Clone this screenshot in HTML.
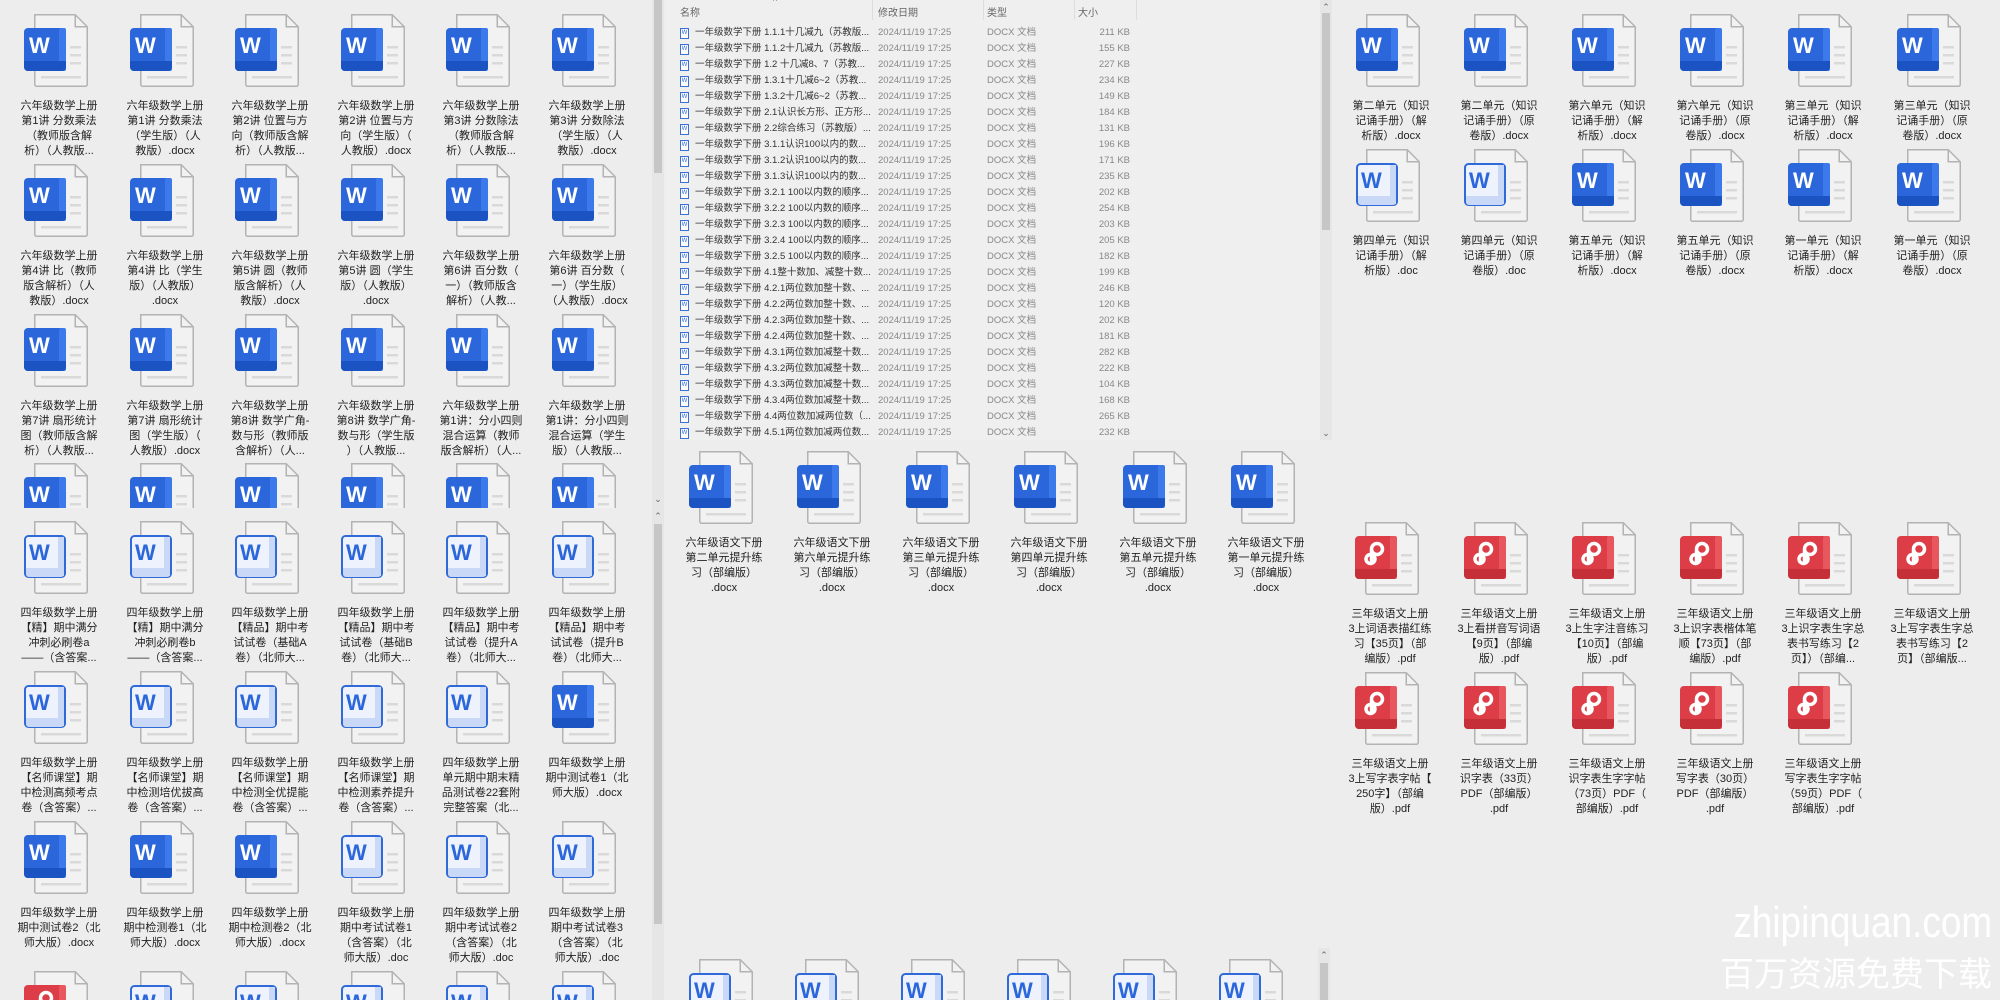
<!DOCTYPE html>
<html><head><meta charset="utf-8"><style>
*{box-sizing:border-box}
html{overflow:hidden;height:1000px}
body{margin:0;width:2000px;height:1000px;background:#ededed;position:relative;overflow:hidden;font-family:"Liberation Sans","Noto Sans CJK SC",sans-serif}
.pn{position:absolute;overflow:hidden}
.i{position:absolute;width:86px;height:150px}
.i svg{position:absolute;left:8px;top:0;width:66px;height:75px}
.i p{position:absolute;top:86px;left:-4px;width:94px;margin:0;text-align:center;font-size:11px;line-height:15px;color:#222;white-space:nowrap}
.sb{position:absolute;width:12px;background:#e6e6e6;overflow:hidden}
.th{position:absolute;left:2px;width:8px;background:#c6c6c6}
.ar{position:absolute;left:0;width:12px;text-align:center;font-size:9px;color:#666;line-height:10px}
.hd{position:absolute;top:4px;font-size:10px;color:#666}
.sep{position:absolute;top:0;width:1px;height:20px;background:#ddd}
.r{position:absolute;left:0;width:650px;height:16px;font-size:9.5px;line-height:16px;white-space:nowrap}
.r i{position:absolute;left:15px;top:3px;width:9px;height:11px;border:1px solid #3a6fd6;background:#fff;font-style:normal;font-size:6px;color:#2a64d6;line-height:9px;text-align:center}
.r .n{position:absolute;left:30px;width:177px;overflow:hidden;color:#333}
.r .d{position:absolute;left:213px;color:#888}
.r .t{position:absolute;left:322px;color:#888}
.r .s{position:absolute;left:415px;width:50px;text-align:right;color:#888}
.wm{position:absolute;right:8px;color:#fff;white-space:nowrap;text-align:right}
</style></head><body>
<svg width="0" height="0" style="position:absolute">
<defs>
<symbol id="pg" viewBox="0 0 66 75">
<path d="M10.75 1.75h40.5l12 12v57.5a2 2 0 0 1-2 2h-48.5a2 2 0 0 1-2-2z" fill="#f2f2f2" stroke="#b3b3b3" stroke-width="1.5"/>
<path d="M51.25 1.75v12h12" fill="none" stroke="#b3b3b3" stroke-width="1.5"/>
<rect x="46" y="33" width="11" height="2.5" fill="#d9d9d9"/><rect x="46" y="41" width="11" height="2.5" fill="#d9d9d9"/><rect x="46" y="49" width="11" height="2.5" fill="#d9d9d9"/><rect x="17" y="63" width="40" height="2.5" fill="#d9d9d9"/>
</symbol>
<symbol id="w" viewBox="0 0 66 75">
<use href="#pg"/>
<rect x="0" y="15" width="42" height="43" rx="4" fill="#2b67da"/>
<rect x="35" y="15" width="7" height="43" rx="2" fill="#3c79ea"/>
<path d="M0 48h42v6a4 4 0 0 1-4 4h-34a4 4 0 0 1-4-4z" fill="#1c53c2"/>
<text x="5" y="40" fill="#fff" font-family="Liberation Sans" font-weight="bold" font-size="22">W</text>
</symbol>
<symbol id="wl" viewBox="0 0 66 75">
<use href="#pg"/>
<rect x="1" y="16" width="40" height="41" rx="3.5" fill="#eef2fc" stroke="#2f6ad8" stroke-width="2"/>
<rect x="34" y="17" width="6" height="39" fill="#c9d8f6"/>
<path d="M2 48h38v6a3 3 0 0 1-3 3h-32a3 3 0 0 1-3-3z" fill="#c9d8f6"/>
<text x="5" y="40" fill="#2b67da" font-family="Liberation Sans" font-weight="bold" font-size="22">W</text>
</symbol>
<symbol id="pd" viewBox="0 0 66 75">
<use href="#pg"/>
<rect x="0" y="15" width="42" height="43" rx="4" fill="#dd3d46"/>
<rect x="35" y="15" width="7" height="43" rx="2" fill="#e8565e"/>
<path d="M0 48h42v6a4 4 0 0 1-4 4h-34a4 4 0 0 1-4-4z" fill="#c42f38"/>
<circle cx="22" cy="28" r="5.5" fill="none" stroke="#fff" stroke-width="3.5"/>
<circle cx="15.5" cy="38" r="4.5" fill="none" stroke="#fff" stroke-width="3.5"/>
<path d="M16.5 29.5v12" stroke="#fff" stroke-width="3.5"/>
</symbol>
</defs></svg>

<div class="pn" style="left:0;top:0;width:652px;height:508px">
<div class="i" style="left:16px;top:13px"><svg><use href="#w"/></svg><p>六年级数学上册<br>第1讲 分数乘法<br>（教师版含解<br>析）（人教版...</p></div>
<div class="i" style="left:122px;top:13px"><svg><use href="#w"/></svg><p>六年级数学上册<br>第1讲 分数乘法<br>（学生版）（人<br>教版）.docx</p></div>
<div class="i" style="left:227px;top:13px"><svg><use href="#w"/></svg><p>六年级数学上册<br>第2讲 位置与方<br>向（教师版含解<br>析）（人教版...</p></div>
<div class="i" style="left:333px;top:13px"><svg><use href="#w"/></svg><p>六年级数学上册<br>第2讲 位置与方<br>向（学生版）（<br>人教版）.docx</p></div>
<div class="i" style="left:438px;top:13px"><svg><use href="#w"/></svg><p>六年级数学上册<br>第3讲 分数除法<br>（教师版含解<br>析）（人教版...</p></div>
<div class="i" style="left:544px;top:13px"><svg><use href="#w"/></svg><p>六年级数学上册<br>第3讲 分数除法<br>（学生版）（人<br>教版）.docx</p></div>

<div class="i" style="left:16px;top:163px"><svg><use href="#w"/></svg><p>六年级数学上册<br>第4讲 比（教师<br>版含解析）（人<br>教版）.docx</p></div>
<div class="i" style="left:122px;top:163px"><svg><use href="#w"/></svg><p>六年级数学上册<br>第4讲 比（学生<br>版）（人教版）<br>.docx</p></div>
<div class="i" style="left:227px;top:163px"><svg><use href="#w"/></svg><p>六年级数学上册<br>第5讲 圆（教师<br>版含解析）（人<br>教版）.docx</p></div>
<div class="i" style="left:333px;top:163px"><svg><use href="#w"/></svg><p>六年级数学上册<br>第5讲 圆（学生<br>版）（人教版）<br>.docx</p></div>
<div class="i" style="left:438px;top:163px"><svg><use href="#w"/></svg><p>六年级数学上册<br>第6讲 百分数（<br>一）（教师版含<br>解析）（人教...</p></div>
<div class="i" style="left:544px;top:163px"><svg><use href="#w"/></svg><p>六年级数学上册<br>第6讲 百分数（<br>一）（学生版）<br>（人教版）.docx</p></div>

<div class="i" style="left:16px;top:313px"><svg><use href="#w"/></svg><p>六年级数学上册<br>第7讲 扇形统计<br>图（教师版含解<br>析）（人教版...</p></div>
<div class="i" style="left:122px;top:313px"><svg><use href="#w"/></svg><p>六年级数学上册<br>第7讲 扇形统计<br>图（学生版）（<br>人教版）.docx</p></div>
<div class="i" style="left:227px;top:313px"><svg><use href="#w"/></svg><p>六年级数学上册<br>第8讲 数学广角-<br>数与形（教师版<br>含解析）（人...</p></div>
<div class="i" style="left:333px;top:313px"><svg><use href="#w"/></svg><p>六年级数学上册<br>第8讲 数学广角-<br>数与形（学生版<br>）（人教版...</p></div>
<div class="i" style="left:438px;top:313px"><svg><use href="#w"/></svg><p>六年级数学上册<br>第1讲：分小四则<br>混合运算（教师<br>版含解析）（人...</p></div>
<div class="i" style="left:544px;top:313px"><svg><use href="#w"/></svg><p>六年级数学上册<br>第1讲：分小四则<br>混合运算（学生<br>版）（人教版...</p></div>

<div class="i" style="left:16px;top:462px;height:46px;overflow:hidden"><svg><use href="#w"/></svg></div>
<div class="i" style="left:122px;top:462px;height:46px;overflow:hidden"><svg><use href="#w"/></svg></div>
<div class="i" style="left:227px;top:462px;height:46px;overflow:hidden"><svg><use href="#w"/></svg></div>
<div class="i" style="left:333px;top:462px;height:46px;overflow:hidden"><svg><use href="#w"/></svg></div>
<div class="i" style="left:438px;top:462px;height:46px;overflow:hidden"><svg><use href="#w"/></svg></div>
<div class="i" style="left:544px;top:462px;height:46px;overflow:hidden"><svg><use href="#w"/></svg></div>
</div>

<div class="pn" style="left:0;top:508px;width:652px;height:492px">
<div class="i" style="left:16px;top:12px"><svg><use href="#wl"/></svg><p>四年级数学上册<br>【精】期中满分<br>冲刺必刷卷a<br>——（含答案...</p></div>
<div class="i" style="left:122px;top:12px"><svg><use href="#wl"/></svg><p>四年级数学上册<br>【精】期中满分<br>冲刺必刷卷b<br>——（含答案...</p></div>
<div class="i" style="left:227px;top:12px"><svg><use href="#wl"/></svg><p>四年级数学上册<br>【精品】期中考<br>试试卷（基础A<br>卷）（北师大...</p></div>
<div class="i" style="left:333px;top:12px"><svg><use href="#wl"/></svg><p>四年级数学上册<br>【精品】期中考<br>试试卷（基础B<br>卷）（北师大...</p></div>
<div class="i" style="left:438px;top:12px"><svg><use href="#wl"/></svg><p>四年级数学上册<br>【精品】期中考<br>试试卷（提升A<br>卷）（北师大...</p></div>
<div class="i" style="left:544px;top:12px"><svg><use href="#wl"/></svg><p>四年级数学上册<br>【精品】期中考<br>试试卷（提升B<br>卷）（北师大...</p></div>

<div class="i" style="left:16px;top:162px"><svg><use href="#wl"/></svg><p>四年级数学上册<br>【名师课堂】期<br>中检测高频考点<br>卷（含答案）...</p></div>
<div class="i" style="left:122px;top:162px"><svg><use href="#wl"/></svg><p>四年级数学上册<br>【名师课堂】期<br>中检测培优拔高<br>卷（含答案）...</p></div>
<div class="i" style="left:227px;top:162px"><svg><use href="#wl"/></svg><p>四年级数学上册<br>【名师课堂】期<br>中检测全优提能<br>卷（含答案）...</p></div>
<div class="i" style="left:333px;top:162px"><svg><use href="#wl"/></svg><p>四年级数学上册<br>【名师课堂】期<br>中检测素养提升<br>卷（含答案）...</p></div>
<div class="i" style="left:438px;top:162px"><svg><use href="#wl"/></svg><p>四年级数学上册<br>单元期中期末精<br>品测试卷22套附<br>完整答案（北...</p></div>
<div class="i" style="left:544px;top:162px"><svg><use href="#w"/></svg><p>四年级数学上册<br>期中测试卷1（北<br>师大版）.docx</p></div>

<div class="i" style="left:16px;top:312px"><svg><use href="#w"/></svg><p>四年级数学上册<br>期中测试卷2（北<br>师大版）.docx</p></div>
<div class="i" style="left:122px;top:312px"><svg><use href="#w"/></svg><p>四年级数学上册<br>期中检测卷1（北<br>师大版）.docx</p></div>
<div class="i" style="left:227px;top:312px"><svg><use href="#w"/></svg><p>四年级数学上册<br>期中检测卷2（北<br>师大版）.docx</p></div>
<div class="i" style="left:333px;top:312px"><svg><use href="#wl"/></svg><p>四年级数学上册<br>期中考试试卷1<br>（含答案）（北<br>师大版）.doc</p></div>
<div class="i" style="left:438px;top:312px"><svg><use href="#wl"/></svg><p>四年级数学上册<br>期中考试试卷2<br>（含答案）（北<br>师大版）.doc</p></div>
<div class="i" style="left:544px;top:312px"><svg><use href="#wl"/></svg><p>四年级数学上册<br>期中考试试卷3<br>（含答案）（北<br>师大版）.doc</p></div>

<div class="i" style="left:16px;top:462px;height:30px;overflow:hidden"><svg><use href="#pd"/></svg></div>
<div class="i" style="left:122px;top:462px;height:30px;overflow:hidden"><svg><use href="#wl"/></svg></div>
<div class="i" style="left:227px;top:462px;height:30px;overflow:hidden"><svg><use href="#wl"/></svg></div>
<div class="i" style="left:333px;top:462px;height:30px;overflow:hidden"><svg><use href="#wl"/></svg></div>
<div class="i" style="left:438px;top:462px;height:30px;overflow:hidden"><svg><use href="#wl"/></svg></div>
<div class="i" style="left:544px;top:462px;height:30px;overflow:hidden"><svg><use href="#wl"/></svg></div>
</div>

<div class="sb" style="left:652px;top:0;height:508px"><div class="th" style="top:0;height:173px"></div><div class="ar" style="top:494px">&#8964;</div></div>
<div class="sb" style="left:652px;top:508px;height:492px"><div class="ar" style="top:3px">&#8963;</div><div class="th" style="top:16px;height:400px"></div></div>

<div class="pn" style="left:665px;top:0;width:655px;height:440px;background:#efefef">
<div style="position:absolute;left:108px;top:-4px;font-size:9px;color:#888">^</div>
<div class="hd" style="left:15px">名称</div>
<div class="sep" style="left:207px"></div>
<div class="hd" style="left:213px">修改日期</div>
<div class="sep" style="left:318px"></div>
<div class="hd" style="left:322px">类型</div>
<div class="sep" style="left:409px"></div>
<div class="hd" style="left:413px">大小</div>
<div class="sep" style="left:471px"></div>
<div class="r" style="top:25px"><i>W</i><span class="n">一年级数学下册 1.1.1十几减九（苏教版...</span><span class="d">2024/11/19 17:25</span><span class="t">DOCX 文档</span><span class="s">211 KB</span></div>
<div class="r" style="top:41px"><i>W</i><span class="n">一年级数学下册 1.1.2十几减九（苏教版...</span><span class="d">2024/11/19 17:25</span><span class="t">DOCX 文档</span><span class="s">155 KB</span></div>
<div class="r" style="top:57px"><i>W</i><span class="n">一年级数学下册 1.2 十几减8、7（苏教...</span><span class="d">2024/11/19 17:25</span><span class="t">DOCX 文档</span><span class="s">227 KB</span></div>
<div class="r" style="top:73px"><i>W</i><span class="n">一年级数学下册 1.3.1十几减6~2（苏教...</span><span class="d">2024/11/19 17:25</span><span class="t">DOCX 文档</span><span class="s">234 KB</span></div>
<div class="r" style="top:89px"><i>W</i><span class="n">一年级数学下册 1.3.2十几减6~2（苏教...</span><span class="d">2024/11/19 17:25</span><span class="t">DOCX 文档</span><span class="s">149 KB</span></div>
<div class="r" style="top:105px"><i>W</i><span class="n">一年级数学下册 2.1认识长方形、正方形...</span><span class="d">2024/11/19 17:25</span><span class="t">DOCX 文档</span><span class="s">184 KB</span></div>
<div class="r" style="top:121px"><i>W</i><span class="n">一年级数学下册 2.2综合练习（苏教版）...</span><span class="d">2024/11/19 17:25</span><span class="t">DOCX 文档</span><span class="s">131 KB</span></div>
<div class="r" style="top:137px"><i>W</i><span class="n">一年级数学下册 3.1.1认识100以内的数...</span><span class="d">2024/11/19 17:25</span><span class="t">DOCX 文档</span><span class="s">196 KB</span></div>
<div class="r" style="top:153px"><i>W</i><span class="n">一年级数学下册 3.1.2认识100以内的数...</span><span class="d">2024/11/19 17:25</span><span class="t">DOCX 文档</span><span class="s">171 KB</span></div>
<div class="r" style="top:169px"><i>W</i><span class="n">一年级数学下册 3.1.3认识100以内的数...</span><span class="d">2024/11/19 17:25</span><span class="t">DOCX 文档</span><span class="s">235 KB</span></div>
<div class="r" style="top:185px"><i>W</i><span class="n">一年级数学下册 3.2.1 100以内数的顺序...</span><span class="d">2024/11/19 17:25</span><span class="t">DOCX 文档</span><span class="s">202 KB</span></div>
<div class="r" style="top:201px"><i>W</i><span class="n">一年级数学下册 3.2.2 100以内数的顺序...</span><span class="d">2024/11/19 17:25</span><span class="t">DOCX 文档</span><span class="s">254 KB</span></div>
<div class="r" style="top:217px"><i>W</i><span class="n">一年级数学下册 3.2.3 100以内数的顺序...</span><span class="d">2024/11/19 17:25</span><span class="t">DOCX 文档</span><span class="s">203 KB</span></div>
<div class="r" style="top:233px"><i>W</i><span class="n">一年级数学下册 3.2.4 100以内数的顺序...</span><span class="d">2024/11/19 17:25</span><span class="t">DOCX 文档</span><span class="s">205 KB</span></div>
<div class="r" style="top:249px"><i>W</i><span class="n">一年级数学下册 3.2.5 100以内数的顺序...</span><span class="d">2024/11/19 17:25</span><span class="t">DOCX 文档</span><span class="s">182 KB</span></div>
<div class="r" style="top:265px"><i>W</i><span class="n">一年级数学下册 4.1整十数加、减整十数...</span><span class="d">2024/11/19 17:25</span><span class="t">DOCX 文档</span><span class="s">199 KB</span></div>
<div class="r" style="top:281px"><i>W</i><span class="n">一年级数学下册 4.2.1两位数加整十数、...</span><span class="d">2024/11/19 17:25</span><span class="t">DOCX 文档</span><span class="s">246 KB</span></div>
<div class="r" style="top:297px"><i>W</i><span class="n">一年级数学下册 4.2.2两位数加整十数、...</span><span class="d">2024/11/19 17:25</span><span class="t">DOCX 文档</span><span class="s">120 KB</span></div>
<div class="r" style="top:313px"><i>W</i><span class="n">一年级数学下册 4.2.3两位数加整十数、...</span><span class="d">2024/11/19 17:25</span><span class="t">DOCX 文档</span><span class="s">202 KB</span></div>
<div class="r" style="top:329px"><i>W</i><span class="n">一年级数学下册 4.2.4两位数加整十数、...</span><span class="d">2024/11/19 17:25</span><span class="t">DOCX 文档</span><span class="s">181 KB</span></div>
<div class="r" style="top:345px"><i>W</i><span class="n">一年级数学下册 4.3.1两位数加减整十数...</span><span class="d">2024/11/19 17:25</span><span class="t">DOCX 文档</span><span class="s">282 KB</span></div>
<div class="r" style="top:361px"><i>W</i><span class="n">一年级数学下册 4.3.2两位数加减整十数...</span><span class="d">2024/11/19 17:25</span><span class="t">DOCX 文档</span><span class="s">222 KB</span></div>
<div class="r" style="top:377px"><i>W</i><span class="n">一年级数学下册 4.3.3两位数加减整十数...</span><span class="d">2024/11/19 17:25</span><span class="t">DOCX 文档</span><span class="s">104 KB</span></div>
<div class="r" style="top:393px"><i>W</i><span class="n">一年级数学下册 4.3.4两位数加减整十数...</span><span class="d">2024/11/19 17:25</span><span class="t">DOCX 文档</span><span class="s">168 KB</span></div>
<div class="r" style="top:409px"><i>W</i><span class="n">一年级数学下册 4.4两位数加减两位数（...</span><span class="d">2024/11/19 17:25</span><span class="t">DOCX 文档</span><span class="s">265 KB</span></div>
<div class="r" style="top:425px"><i>W</i><span class="n">一年级数学下册 4.5.1两位数加减两位数...</span><span class="d">2024/11/19 17:25</span><span class="t">DOCX 文档</span><span class="s">232 KB</span></div>
</div>
<div class="sb" style="left:1320px;top:0;height:440px"><div class="ar" style="top:2px">&#8963;</div><div class="th" style="top:13px;height:217px"></div><div class="ar" style="top:428px">&#8964;</div></div>

<div class="i" style="left:681px;top:450px"><svg><use href="#w"/></svg><p>六年级语文下册<br>第二单元提升练<br>习（部编版）<br>.docx</p></div>
<div class="i" style="left:789px;top:450px"><svg><use href="#w"/></svg><p>六年级语文下册<br>第六单元提升练<br>习（部编版）<br>.docx</p></div>
<div class="i" style="left:898px;top:450px"><svg><use href="#w"/></svg><p>六年级语文下册<br>第三单元提升练<br>习（部编版）<br>.docx</p></div>
<div class="i" style="left:1006px;top:450px"><svg><use href="#w"/></svg><p>六年级语文下册<br>第四单元提升练<br>习（部编版）<br>.docx</p></div>
<div class="i" style="left:1115px;top:450px"><svg><use href="#w"/></svg><p>六年级语文下册<br>第五单元提升练<br>习（部编版）<br>.docx</p></div>
<div class="i" style="left:1223px;top:450px"><svg><use href="#w"/></svg><p>六年级语文下册<br>第一单元提升练<br>习（部编版）<br>.docx</p></div>

<div class="pn" style="left:665px;top:950px;width:655px;height:50px">
<div class="i" style="left:16px;top:8px;height:42px;overflow:hidden"><svg><use href="#wl"/></svg></div>
<div class="i" style="left:122px;top:8px;height:42px;overflow:hidden"><svg><use href="#wl"/></svg></div>
<div class="i" style="left:228px;top:8px;height:42px;overflow:hidden"><svg><use href="#wl"/></svg></div>
<div class="i" style="left:334px;top:8px;height:42px;overflow:hidden"><svg><use href="#wl"/></svg></div>
<div class="i" style="left:440px;top:8px;height:42px;overflow:hidden"><svg><use href="#wl"/></svg></div>
<div class="i" style="left:546px;top:8px;height:42px;overflow:hidden"><svg><use href="#wl"/></svg></div>
</div>
<div class="sb" style="left:1318px;top:948px;height:52px"><div class="ar" style="top:2px">&#8963;</div><div class="th" style="top:15px;height:37px"></div></div>

<div class="i" style="left:1348px;top:13px"><svg><use href="#w"/></svg><p>第二单元（知识<br>记诵手册）（解<br>析版）.docx</p></div>
<div class="i" style="left:1456px;top:13px"><svg><use href="#w"/></svg><p>第二单元（知识<br>记诵手册）（原<br>卷版）.docx</p></div>
<div class="i" style="left:1564px;top:13px"><svg><use href="#w"/></svg><p>第六单元（知识<br>记诵手册）（解<br>析版）.docx</p></div>
<div class="i" style="left:1672px;top:13px"><svg><use href="#w"/></svg><p>第六单元（知识<br>记诵手册）（原<br>卷版）.docx</p></div>
<div class="i" style="left:1780px;top:13px"><svg><use href="#w"/></svg><p>第三单元（知识<br>记诵手册）（解<br>析版）.docx</p></div>
<div class="i" style="left:1889px;top:13px"><svg><use href="#w"/></svg><p>第三单元（知识<br>记诵手册）（原<br>卷版）.docx</p></div>

<div class="i" style="left:1348px;top:148px"><svg><use href="#wl"/></svg><p>第四单元（知识<br>记诵手册）（解<br>析版）.doc</p></div>
<div class="i" style="left:1456px;top:148px"><svg><use href="#wl"/></svg><p>第四单元（知识<br>记诵手册）（原<br>卷版）.doc</p></div>
<div class="i" style="left:1564px;top:148px"><svg><use href="#w"/></svg><p>第五单元（知识<br>记诵手册）（解<br>析版）.docx</p></div>
<div class="i" style="left:1672px;top:148px"><svg><use href="#w"/></svg><p>第五单元（知识<br>记诵手册）（原<br>卷版）.docx</p></div>
<div class="i" style="left:1780px;top:148px"><svg><use href="#w"/></svg><p>第一单元（知识<br>记诵手册）（解<br>析版）.docx</p></div>
<div class="i" style="left:1889px;top:148px"><svg><use href="#w"/></svg><p>第一单元（知识<br>记诵手册）（原<br>卷版）.docx</p></div>

<div class="i" style="left:1347px;top:521px"><svg><use href="#pd"/></svg><p>三年级语文上册<br>3上词语表描红练<br>习【35页】（部<br>编版）.pdf</p></div>
<div class="i" style="left:1456px;top:521px"><svg><use href="#pd"/></svg><p>三年级语文上册<br>3上看拼音写词语<br>【9页】（部编<br>版）.pdf</p></div>
<div class="i" style="left:1564px;top:521px"><svg><use href="#pd"/></svg><p>三年级语文上册<br>3上生字注音练习<br>【10页】（部编<br>版）.pdf</p></div>
<div class="i" style="left:1672px;top:521px"><svg><use href="#pd"/></svg><p>三年级语文上册<br>3上识字表楷体笔<br>顺【73页】（部<br>编版）.pdf</p></div>
<div class="i" style="left:1780px;top:521px"><svg><use href="#pd"/></svg><p>三年级语文上册<br>3上识字表生字总<br>表书写练习【2<br>页】）（部编...</p></div>
<div class="i" style="left:1889px;top:521px"><svg><use href="#pd"/></svg><p>三年级语文上册<br>3上写字表生字总<br>表书写练习【2<br>页】（部编版...</p></div>

<div class="i" style="left:1347px;top:671px"><svg><use href="#pd"/></svg><p>三年级语文上册<br>3上写字表字帖【<br>250字】（部编<br>版）.pdf</p></div>
<div class="i" style="left:1456px;top:671px"><svg><use href="#pd"/></svg><p>三年级语文上册<br>识字表（33页）<br>PDF（部编版）<br>.pdf</p></div>
<div class="i" style="left:1564px;top:671px"><svg><use href="#pd"/></svg><p>三年级语文上册<br>识字表生字字帖<br>（73页）PDF（<br>部编版）.pdf</p></div>
<div class="i" style="left:1672px;top:671px"><svg><use href="#pd"/></svg><p>三年级语文上册<br>写字表（30页）<br>PDF（部编版）<br>.pdf</p></div>
<div class="i" style="left:1780px;top:671px"><svg><use href="#pd"/></svg><p>三年级语文上册<br>写字表生字字帖<br>（59页）PDF（<br>部编版）.pdf</p></div>

<div class="wm" style="top:898px;font-size:44px;line-height:50px;transform:scaleX(0.84);transform-origin:right top">zhipinquan.com</div>
<div class="wm" style="top:950px;font-size:34px;line-height:44px;font-family:'Noto Sans CJK SC',sans-serif">百万资源免费下载</div>
</body></html>
